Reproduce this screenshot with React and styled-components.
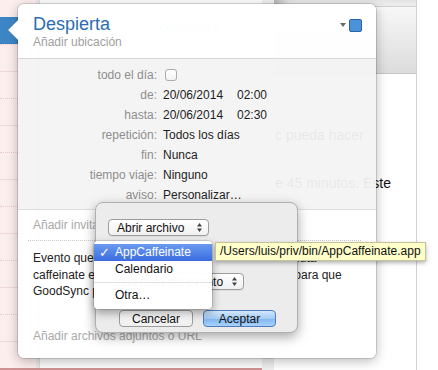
import React from "react";
import styled, { createGlobalStyle } from "styled-components";

const Global = createGlobalStyle`
  html, body { margin: 0; padding: 0; background: #fff; }
  body { font-family: "Liberation Sans", Arial, sans-serif; font-size: 12px; }
`;

const Stage = styled.div`
  position: relative;
  width: 438px;
  height: 370px;
  overflow: hidden;
  display: flex;
  background: #fff;
`;

/* ---------- calendar behind ---------- */
const DayArea = styled.div`
  width: 262px;
  height: 368px;
  display: flex;
  border-bottom: 2px solid #cf9191;
`;

const CalColumn = styled.div`
  position: relative;
  width: 36px;
  background: #fdeeee;
  display: flex;
  flex-direction: column;
  overflow: hidden;
`;

const Slot = styled.div`
  flex-shrink: 0;
  box-sizing: border-box;
  height: ${(p) => p.$h}px;
  border-bottom: 1px ${(p) => (p.$dotted ? "dotted #e8cccc" : "solid #f0d9d9")};
`;

const EventBlock = styled.div`
  position: absolute;
  left: 0;
  top: 17px;
  width: 18px;
  height: 27px;
  background: #3d86c6;
`;

const Strip = styled.div`
  width: 3px;
  background: #e9e9e9;
  border-right: 1px solid #dcdcdc;
`;

const Middle = styled.div`
  flex: 1;
  background: #fdfdfd;
  padding: 21px 0 0 119px;
`;

const GhostTitle = styled.div`
  font-size: 13px;
  font-weight: bold;
  color: #b9cde3;
`;

const Gap = styled.div`
  width: 12px;
  background: #efefef;
`;

const BackWindow = styled.div`
  width: 142px;
  display: flex;
  flex-direction: column;
  padding-top: 6px;
  background: #ececec;
  border-right: 1px solid #d0d0d0;
  box-shadow: inset 14px 0 14px -8px rgba(0, 0, 0, 0.28);
`;

const WinHeader = styled.div`
  height: 66px;
  background: linear-gradient(#f7f7f7, #dcdcdc);
  border-top: 1px solid #d2d2d2;
  border-bottom: 1px solid #c6c6c6;
`;

const WinBody = styled.div`
  flex: 1;
  background: #fff;
  padding: 49px 0 0 1px;
  font-size: 14px;
  line-height: 24px;
  color: #111;
  white-space: nowrap;
`;

const Rest = styled.div`
  flex: 1;
  background: #fff;
`;

/* ---------- popover ---------- */
const Popover = styled.div`
  position: absolute;
  left: 18px;
  top: 4px;
  width: 358px;
  height: 354px;
  border-radius: 6px;
  display: flex;
  flex-direction: column;
  box-shadow: 0 0 0 1px rgba(0, 0, 0, 0.13), 0 3px 12px rgba(0, 0, 0, 0.28);
`;

const Arrow = styled.svg`
  position: absolute;
  left: -11px;
  top: 15px;
`;

const Header = styled.div`
  height: 55px;
  display: flex;
  justify-content: space-between;
  padding: 10px 14px 0 15px;
  box-sizing: border-box;
  flex-shrink: 0;
  background: rgba(255, 255, 255, 0.95);
  border-bottom: 1px solid #d6d6d6;
  border-radius: 6px 6px 0 0;
`;

const Title = styled.div`
  font-size: 18px;
  line-height: 20px;
  color: #2a6db2;
`;

const Subtitle = styled.div`
  margin-top: 1px;
  font-size: 12px;
  line-height: 15px;
  color: #a0a0a0;
`;

const Controls = styled.div`
  margin-top: 5px;
  display: flex;
  align-items: flex-start;
  gap: 3px;
`;

const Caret = styled.div`
  margin-top: 4px;
  width: 0;
  height: 0;
  border-left: 3px solid transparent;
  border-right: 3px solid transparent;
  border-top: 4px solid #6a6a6a;
`;

const ColorBox = styled.div`
  width: 11px;
  height: 11px;
  border: 1px solid #2b64a6;
  border-radius: 2px;
  background: #4a92da;
`;

const Details = styled.div`
  height: 151px;
  box-sizing: border-box;
  flex-shrink: 0;
  padding: 6px 0 5px;
  background: rgba(243, 243, 243, 0.95);
  border-bottom: 1px solid #dedede;
  display: grid;
  grid-template-columns: 139px 1fr;
  column-gap: 6px;
  grid-auto-rows: 20px;
  line-height: 20px;
`;

const Label = styled.div`
  text-align: right;
  color: #8e8e8e;
`;

const Value = styled.div`
  color: #1e1e1e;
  display: flex;
  align-items: center;
`;

const Check = styled.span`
  margin-left: 2px;
  width: 10px;
  height: 10px;
  border: 1px solid #ababab;
  border-radius: 3px;
  background: linear-gradient(#fff, #f2f2f2);
`;

const DateText = styled.span`
  display: inline-block;
  width: 74px;
`;

const Lower = styled.div`
  flex: 1;
  background: rgba(255, 255, 255, 0.95);
  border-radius: 0 0 6px 6px;
  display: flex;
  flex-direction: column;
`;

const AddRow = styled.div`
  margin: 0 15px 0 10px;
  padding: 7px 0 7px 5px;
  line-height: 16px;
  color: #a9a9a9;
  border-bottom: ${(p) => (p.$dotted ? "1px dotted #c8c8c8" : "none")};
  margin-top: ${(p) => p.$top || 0}px;
`;

const Notes = styled.div`
  padding: 9px 0 0 15px;
  line-height: 16.5px;
  color: #222;
  white-space: nowrap;
`;

/* ---------- dialog ---------- */
const Dialog = styled.div`
  position: absolute;
  left: 95px;
  top: 202px;
  width: 203px;
  height: 131px;
  box-sizing: border-box;
  padding: 16px 0 0 12px;
  background: #ececec;
  border: 1px solid #b0b0b0;
  border-radius: 8px;
  box-shadow: 0 4px 12px rgba(0, 0, 0, 0.35);
  display: flex;
  flex-direction: column;
`;

const PopupButton = styled.div`
  width: ${(p) => p.$w}px;
  height: 17px;
  box-sizing: border-box;
  margin-top: ${(p) => p.$top || 0}px;
  padding: 0 6px 0 8px;
  display: flex;
  align-items: center;
  justify-content: space-between;
  background: linear-gradient(#ffffff, #f1f1f1);
  border: 1px solid #9d9d9d;
  border-radius: 4px;
  box-shadow: 0 1px 0 rgba(0, 0, 0, 0.06);
  color: #111;
  font-size: 12px;
`;

const ButtonRow = styled.div`
  margin: 20px 0 0 11px;
  display: flex;
  gap: 10px;
`;

const Button = styled.div`
  width: ${(p) => p.$w}px;
  height: 17px;
  box-sizing: border-box;
  display: flex;
  align-items: center;
  justify-content: center;
  border-radius: 4px;
  font-size: 12px;
  color: #111;
  border: 1px solid ${(p) => (p.$primary ? "#4f7cbc" : "#9c9c9c")};
  background: ${(p) =>
    p.$primary
      ? "linear-gradient(#d3e7fc, #a3cbf4 50%, #7fb6f0 51%, #a9d2fa)"
      : "linear-gradient(#ffffff, #efefef)"};
`;

const Menu = styled.div`
  position: absolute;
  left: 94px;
  top: 241px;
  width: 118px;
  height: 68px;
  box-sizing: border-box;
  padding-top: 3px;
  background: rgba(255, 255, 255, 0.975);
  border-radius: 4px;
  box-shadow: 0 0 0 1px rgba(0, 0, 0, 0.12), 0 4px 10px rgba(0, 0, 0, 0.35);
`;

const MenuItem = styled.div`
  position: relative;
  height: 17px;
  line-height: 17px;
  padding-left: 21px;
  font-size: 12px;
  color: ${(p) => (p.$active ? "#fff" : "#111")};
  background: ${(p) => (p.$active ? "linear-gradient(#6a9bf0, #3a6ce0)" : "transparent")};
`;

const Tick = styled.span`
  position: absolute;
  left: 5px;
  top: 0;
  font-family: "DejaVu Sans", sans-serif;
  font-weight: bold;
  font-size: 13px;
`;

const Separator = styled.div`
  height: 1px;
  margin: 4px 0;
  background: #e2e2e2;
`;

const Tooltip = styled.div`
  position: absolute;
  left: 215px;
  top: 242px;
  height: 19px;
  box-sizing: border-box;
  padding: 0 4px 0 4px;
  line-height: 17px;
  font-size: 12px;
  color: #111;
  white-space: nowrap;
  background: #ffffca;
  border: 1px solid #c4c49a;
  box-shadow: 0 2px 4px rgba(0, 0, 0, 0.3);
`;

const Arrows = () => (
  <svg width="5" height="9" viewBox="0 0 5 9">
    <path d="M2.5 0 L5 3.4 L0 3.4 Z M2.5 9 L5 5.6 L0 5.6 Z" fill="#444" />
  </svg>
);

const rows = [
  ["todo el día:", <Check />],
  ["de:", <><DateText>20/06/2014</DateText>02:00</>],
  ["hasta:", <><DateText>20/06/2014</DateText>02:30</>],
  ["repetición:", "Todos los días"],
  ["fin:", "Nunca"],
  ["tiempo viaje:", "Ninguno"],
  ["aviso:", "Personalizar…"],
];

export default function App() {
  return (
    <Stage>
      <Global />
      <DayArea>
        <CalColumn>
          <Slot $h={18} />
          {Array.from({ length: 13 }).map((_, i) => (
            <Slot key={i} $h={27} $dotted={i % 2 === 0} />
          ))}
          <EventBlock />
        </CalColumn>
        <Strip />
        <Middle>
          <GhostTitle>Despierta</GhostTitle>
        </Middle>
      </DayArea>
      <Gap />
      <BackWindow>
        <WinHeader />
        <WinBody>
          <div>c pueda hacer</div>
          <div>&nbsp;</div>
          <div>e 45 minutos. Este</div>
        </WinBody>
      </BackWindow>
      <Rest />

      <Popover>
        <Arrow width="12" height="22" viewBox="0 0 12 22">
          <path d="M12 0 L1 11 L12 22 Z" fill="#fff" stroke="rgba(0,0,0,0.12)" strokeWidth="1" />
          <rect x="11" y="0" width="2" height="22" fill="#fff" />
        </Arrow>
        <Header>
          <div>
            <Title>Despierta</Title>
            <Subtitle>Añadir ubicación</Subtitle>
          </div>
          <Controls>
            <Caret />
            <ColorBox />
          </Controls>
        </Header>
        <Details>
          {rows.map(([label, value]) => (
            <React.Fragment key={label}>
              <Label>{label}</Label>
              <Value>{value}</Value>
            </React.Fragment>
          ))}
        </Details>
        <Lower>
          <AddRow $dotted>Añadir invitados</AddRow>
          <Notes>
            <div>Evento que cada día a las 2:00 de la mañana ejecuta</div>
            <div>caffeinate en el ordenador durante unos minutos para que</div>
            <div>GoodSync pueda hacer la copia.</div>
          </Notes>
          <AddRow $top={21}>Añadir archivos adjuntos o URL</AddRow>
        </Lower>
      </Popover>

      <Dialog>
        <PopupButton $w={101}>
          Abrir archivo
          <Arrows />
        </PopupButton>
        <PopupButton $w={136} $top={37}>
          A la hora del evento
          <Arrows />
        </PopupButton>
        <ButtonRow>
          <Button $w={74}>Cancelar</Button>
          <Button $w={73} $primary>
            Aceptar
          </Button>
        </ButtonRow>
      </Dialog>

      <Menu>
        <MenuItem $active>
          <Tick>✓</Tick>AppCaffeinate
        </MenuItem>
        <MenuItem>Calendario</MenuItem>
        <Separator />
        <MenuItem>Otra…</MenuItem>
      </Menu>

      <Tooltip>/Users/luis/priv/bin/AppCaffeinate.app</Tooltip>
    </Stage>
  );
}
